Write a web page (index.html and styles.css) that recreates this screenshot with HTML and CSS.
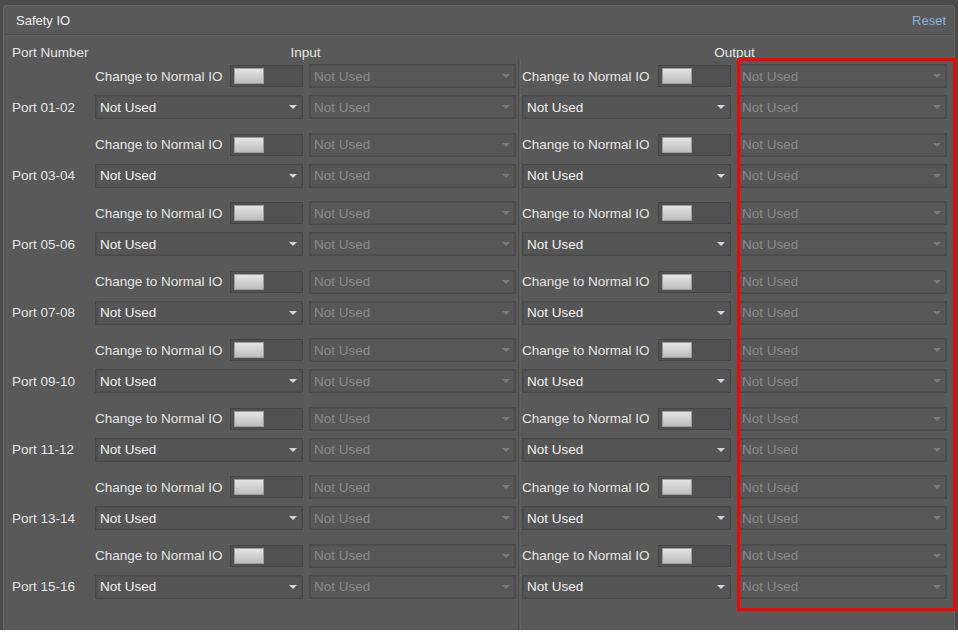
FILE: index.html
```html
<!DOCTYPE html>
<html lang="en">
<head>
    <meta charset="UTF-8">
    <meta name="viewport" content="width=device-width, initial-scale=1.0">
    <title>Safety IO</title>
    <link rel="stylesheet" href="styles.css">
</head>
<body>
    <div class="window">
        <div class="panel">
            <div class="panel-header">
                <span class="title">Safety IO</span>
                <a class="reset" href="#">Reset</a>
            </div>
            <div class="io-body">
                <div class="col-heads">
                    <span>Port Number</span>
                    <span class="head-center">Input</span>
                    <span class="head-center">Output</span>
                </div>

                <div class="group">
                    <span></span>
                    <div class="switch-cell"><span>Change to Normal IO</span><div class="toggle"><i></i></div></div>
                    <div class="combo disabled"><span>Not Used</span><i class="arrow"></i></div>
                    <div class="switch-cell"><span>Change to Normal IO</span><div class="toggle"><i></i></div></div>
                    <div class="combo disabled"><span>Not Used</span><i class="arrow"></i></div>
                    <span class="port">Port 01-02</span>
                    <div class="combo"><span>Not Used</span><i class="arrow"></i></div>
                    <div class="combo disabled"><span>Not Used</span><i class="arrow"></i></div>
                    <div class="combo"><span>Not Used</span><i class="arrow"></i></div>
                    <div class="combo disabled"><span>Not Used</span><i class="arrow"></i></div>
                </div>

                <div class="group">
                    <span></span>
                    <div class="switch-cell"><span>Change to Normal IO</span><div class="toggle"><i></i></div></div>
                    <div class="combo disabled"><span>Not Used</span><i class="arrow"></i></div>
                    <div class="switch-cell"><span>Change to Normal IO</span><div class="toggle"><i></i></div></div>
                    <div class="combo disabled"><span>Not Used</span><i class="arrow"></i></div>
                    <span class="port">Port 03-04</span>
                    <div class="combo"><span>Not Used</span><i class="arrow"></i></div>
                    <div class="combo disabled"><span>Not Used</span><i class="arrow"></i></div>
                    <div class="combo"><span>Not Used</span><i class="arrow"></i></div>
                    <div class="combo disabled"><span>Not Used</span><i class="arrow"></i></div>
                </div>

                <div class="group">
                    <span></span>
                    <div class="switch-cell"><span>Change to Normal IO</span><div class="toggle"><i></i></div></div>
                    <div class="combo disabled"><span>Not Used</span><i class="arrow"></i></div>
                    <div class="switch-cell"><span>Change to Normal IO</span><div class="toggle"><i></i></div></div>
                    <div class="combo disabled"><span>Not Used</span><i class="arrow"></i></div>
                    <span class="port">Port 05-06</span>
                    <div class="combo"><span>Not Used</span><i class="arrow"></i></div>
                    <div class="combo disabled"><span>Not Used</span><i class="arrow"></i></div>
                    <div class="combo"><span>Not Used</span><i class="arrow"></i></div>
                    <div class="combo disabled"><span>Not Used</span><i class="arrow"></i></div>
                </div>

                <div class="group">
                    <span></span>
                    <div class="switch-cell"><span>Change to Normal IO</span><div class="toggle"><i></i></div></div>
                    <div class="combo disabled"><span>Not Used</span><i class="arrow"></i></div>
                    <div class="switch-cell"><span>Change to Normal IO</span><div class="toggle"><i></i></div></div>
                    <div class="combo disabled"><span>Not Used</span><i class="arrow"></i></div>
                    <span class="port">Port 07-08</span>
                    <div class="combo"><span>Not Used</span><i class="arrow"></i></div>
                    <div class="combo disabled"><span>Not Used</span><i class="arrow"></i></div>
                    <div class="combo"><span>Not Used</span><i class="arrow"></i></div>
                    <div class="combo disabled"><span>Not Used</span><i class="arrow"></i></div>
                </div>

                <div class="group">
                    <span></span>
                    <div class="switch-cell"><span>Change to Normal IO</span><div class="toggle"><i></i></div></div>
                    <div class="combo disabled"><span>Not Used</span><i class="arrow"></i></div>
                    <div class="switch-cell"><span>Change to Normal IO</span><div class="toggle"><i></i></div></div>
                    <div class="combo disabled"><span>Not Used</span><i class="arrow"></i></div>
                    <span class="port">Port 09-10</span>
                    <div class="combo"><span>Not Used</span><i class="arrow"></i></div>
                    <div class="combo disabled"><span>Not Used</span><i class="arrow"></i></div>
                    <div class="combo"><span>Not Used</span><i class="arrow"></i></div>
                    <div class="combo disabled"><span>Not Used</span><i class="arrow"></i></div>
                </div>

                <div class="group">
                    <span></span>
                    <div class="switch-cell"><span>Change to Normal IO</span><div class="toggle"><i></i></div></div>
                    <div class="combo disabled"><span>Not Used</span><i class="arrow"></i></div>
                    <div class="switch-cell"><span>Change to Normal IO</span><div class="toggle"><i></i></div></div>
                    <div class="combo disabled"><span>Not Used</span><i class="arrow"></i></div>
                    <span class="port">Port 11-12</span>
                    <div class="combo"><span>Not Used</span><i class="arrow"></i></div>
                    <div class="combo disabled"><span>Not Used</span><i class="arrow"></i></div>
                    <div class="combo"><span>Not Used</span><i class="arrow"></i></div>
                    <div class="combo disabled"><span>Not Used</span><i class="arrow"></i></div>
                </div>

                <div class="group">
                    <span></span>
                    <div class="switch-cell"><span>Change to Normal IO</span><div class="toggle"><i></i></div></div>
                    <div class="combo disabled"><span>Not Used</span><i class="arrow"></i></div>
                    <div class="switch-cell"><span>Change to Normal IO</span><div class="toggle"><i></i></div></div>
                    <div class="combo disabled"><span>Not Used</span><i class="arrow"></i></div>
                    <span class="port">Port 13-14</span>
                    <div class="combo"><span>Not Used</span><i class="arrow"></i></div>
                    <div class="combo disabled"><span>Not Used</span><i class="arrow"></i></div>
                    <div class="combo"><span>Not Used</span><i class="arrow"></i></div>
                    <div class="combo disabled"><span>Not Used</span><i class="arrow"></i></div>
                </div>

                <div class="group">
                    <span></span>
                    <div class="switch-cell"><span>Change to Normal IO</span><div class="toggle"><i></i></div></div>
                    <div class="combo disabled"><span>Not Used</span><i class="arrow"></i></div>
                    <div class="switch-cell"><span>Change to Normal IO</span><div class="toggle"><i></i></div></div>
                    <div class="combo disabled"><span>Not Used</span><i class="arrow"></i></div>
                    <span class="port">Port 15-16</span>
                    <div class="combo"><span>Not Used</span><i class="arrow"></i></div>
                    <div class="combo disabled"><span>Not Used</span><i class="arrow"></i></div>
                    <div class="combo"><span>Not Used</span><i class="arrow"></i></div>
                    <div class="combo disabled"><span>Not Used</span><i class="arrow"></i></div>
                </div>
            </div>
        </div>
        <!-- highlight around the output selects -->
        <div class="highlight"></div>
    </div>
</body>
</html>
```

FILE: styles.css
```css
body {
    margin: 0;
    background: #ffffff;
    font-family: "Liberation Sans", Arial, sans-serif;
    font-size: 13.5px;
    color: #e4e4e4;
}

.window {
    position: relative;
    height: 630px;
    padding: 5px 3px 0 3px;
    box-sizing: border-box;
    background: #4b4b4b;
}

.panel {
    height: 100%;
    background: #595959;
    border: 1px solid #676767;
    border-bottom: none;
    border-radius: 4px 4px 0 0;
    box-sizing: border-box;
}

.panel-header {
    display: flex;
    justify-content: space-between;
    align-items: center;
    height: 28px;
    padding: 0 8px 0 12px;
    border-bottom: 1px solid #505050;
    box-shadow: 0 1px 0 #5f5f5f;
}

.title {
    font-size: 13px;
    color: #ececec;
}

.reset {
    font-size: 13px;
    color: #8cb1de;
    text-decoration: none;
}

.io-body {
    position: relative;
    height: calc(100% - 29px);
    padding: 10px 8px 0 8px;
    box-sizing: border-box;
}

/* groove between input and output */
.io-body::before {
    content: "";
    position: absolute;
    left: 514px;
    top: 24px;
    bottom: 0;
    width: 1px;
    border-left: 1px solid #4e4e4e;
    border-right: 1px solid #616161;
}

.col-heads {
    display: grid;
    grid-template-columns: 76px 421px 423px;
    column-gap: 7px;
    line-height: 15px;
    margin-bottom: 4px;
    white-space: nowrap;
}

.head-center {
    text-align: center;
}

.group {
    display: grid;
    grid-template-columns: 77px 208px 207px 209px 210px;
    grid-auto-rows: 24px;
    column-gap: 6px;
    row-gap: 7px;
    margin-bottom: 13.57px;
}

.port {
    align-self: center;
}

.switch-cell {
    display: flex;
    justify-content: space-between;
    align-items: center;
    white-space: nowrap;
}

.toggle {
    width: 73px;
    height: 22px;
    background: #515151;
    border: 1px solid #444444;
    box-sizing: border-box;
    padding: 2px 3px;
}

.toggle i {
    display: block;
    width: 30px;
    height: 16px;
    background: linear-gradient(#e4e4e4, #bdbdbd);
    border: 1px solid #9c9c9c;
    box-sizing: border-box;
}

.combo {
    display: flex;
    justify-content: space-between;
    align-items: center;
    padding: 0 5px 0 4px;
    background: #555555;
    border: 1px solid #474747;
    box-shadow: inset 0 0 0 1px #4f4f4f;
    box-sizing: border-box;
    color: #f2f2f2;
}

.combo.disabled {
    background: #575757;
    border-color: #4b4b4b;
    color: #8b8b8b;
}

.arrow {
    width: 0;
    height: 0;
    border-left: 4px solid transparent;
    border-right: 4px solid transparent;
    border-top: 4px solid #d6d6d6;
}

.combo.disabled .arrow {
    border-top-color: #7a7a7a;
}

.highlight {
    position: absolute;
    left: 737px;
    top: 58px;
    width: 219px;
    height: 553px;
    border: 3px solid #ff0000;
    box-sizing: border-box;
}
```
